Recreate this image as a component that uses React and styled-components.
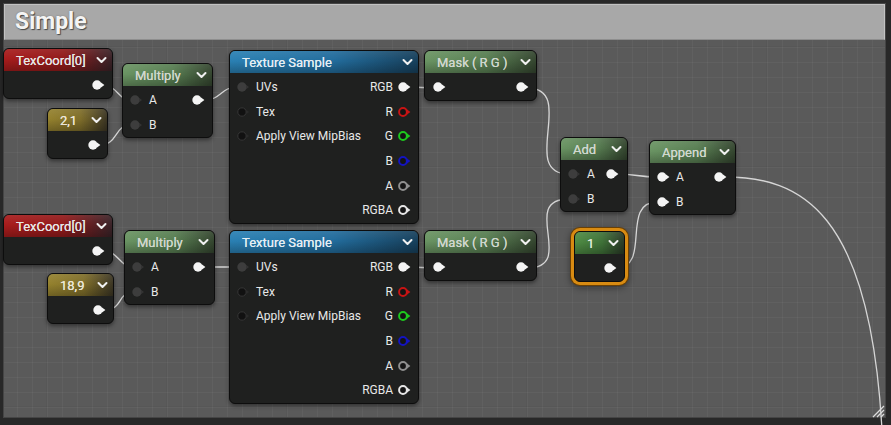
import React from 'react';
import styled, { createGlobalStyle, css } from 'styled-components';

const Global = createGlobalStyle`
  *, *::before, *::after { box-sizing: border-box; }
  html, body { margin: 0; padding: 0; background: #262626; }
  body { font-family: Roboto, "Noto Sans", Arial, sans-serif; }
`;

const HEADS = {
  red: { c1: '#a81c1c', c2: '#921a1b', c3: '#3a2328', text: '#e6e6e6' },
  yellow: { c1: '#95822e', c2: '#7f6e2a', c3: '#3c3624', text: '#ebe6d8' },
  green: { c1: '#6a9463', c2: '#587e52', c3: '#34452f', text: '#d0d7ce' },
  blue: { c1: '#2a80b3', c2: '#226c9c', c3: '#17405c', text: '#e4edf3' },
  const: { c1: '#4f8c44', c2: '#3f7238', c3: '#2a3a27', text: '#e0e7dc' },
};

const Canvas = styled.div`
  position: relative;
  width: 891px;
  height: 425px;
  overflow: hidden;
  background: #282828;
  padding: 3px 5px 7px 3px;
  display: flex;
`;

const Comment = styled.section`
  flex: 1;
  display: flex;
  flex-direction: column;
  border: 1px solid #454545;
  background-color: #5a5a5a;
  background-image:
    linear-gradient(to right, rgba(0, 0, 0, 0.035) 1px, transparent 1px),
    linear-gradient(to bottom, rgba(0, 0, 0, 0.035) 1px, transparent 1px),
    linear-gradient(to right, rgba(255, 255, 255, 0.04) 1px, transparent 1px),
    linear-gradient(to bottom, rgba(255, 255, 255, 0.04) 1px, transparent 1px);
  background-size: 120px 120px, 120px 120px, 15px 15px, 15px 15px;
  background-position: 42px 42px, 42px 42px, 13px 13px, 13px 13px;
`;

const CommentTitle = styled.header`
  height: 36px;
  display: flex;
  align-items: center;
  padding: 0 0 2px 10px;
  background: #a8a8a8;
  border: 1px solid #c2c2c2;
  border-bottom-color: #8e8e8e;
  color: #f4f4f4;
  font-size: 23px;
  font-weight: 700;
  text-shadow: 1px 1px 1px rgba(0, 0, 0, 0.55), 0 0 2px rgba(0, 0, 0, 0.25);
`;

const CommentBody = styled.div`
  flex: 1;
`;

const Wires = styled.svg`
  position: absolute;
  left: 0;
  top: 0;
  pointer-events: none;
`;

const NodeBox = styled.div`
  position: absolute;
  left: ${(p) => p.$x}px;
  top: ${(p) => p.$y}px;
  width: ${(p) => p.$w}px;
  display: flex;
  flex-direction: column;
  background: #1f201f;
  border: 1px solid #0d0d0d;
  border-radius: 6px;
  box-shadow: 0 2px 4px rgba(0, 0, 0, 0.45);
  ${(p) =>
    p.$selected &&
    css`
      box-shadow: 0 0 0 3px #d88b12, 0 0 0 4px #6a4005, 0 2px 6px 4px rgba(0, 0, 0, 0.4);
    `}
`;

const Header = styled.div`
  height: 22px;
  display: flex;
  align-items: center;
  justify-content: space-between;
  padding: 0 5px 0 12px;
  border-radius: 5px 5px 0 0;
  color: ${(p) => p.$h.text};
  font-size: 13px;
  white-space: nowrap;
  text-shadow: 0 0 0.4px currentColor;
  background:
    linear-gradient(to bottom, rgba(255, 255, 255, 0.08) 0%, rgba(0, 0, 0, 0) 45%, rgba(0, 0, 0, 0.26) 100%),
    linear-gradient(to right, ${(p) => p.$h.c1} 0%, ${(p) => p.$h.c2} 55%, ${(p) => p.$h.c3} 100%);
`;

const Body = styled.div`
  display: grid;
  grid-template-columns: 1fr auto;
  padding: 2px ${(p) => p.$pr}px 0 ${(p) => p.$pl}px;
`;

const Col = styled.div`
  display: flex;
  flex-direction: column;
  align-items: ${(p) => (p.$right ? 'flex-end' : 'flex-start')};
`;

const Row = styled.div`
  height: 24.6px;
  display: flex;
  align-items: center;
  gap: 5px;
  font-size: 12px;
  color: #e8e8e8;
  white-space: nowrap;
`;

const PinSvg = styled.svg`
  display: block;
  flex: none;
`;

function Pin({ kind = 'on', color = '#f2f2f2' }) {
  if (kind === 'on') {
    return (
      <PinSvg width="14" height="12" viewBox="0 0 14 12">
        <circle cx="5" cy="6" r="4.7" fill="#f4f4f4" />
        <polygon points="9,3.6 12.4,6 9,8.4" fill="#f4f4f4" />
      </PinSvg>
    );
  }
  if (kind === 'dim') {
    return (
      <PinSvg width="14" height="12" viewBox="0 0 14 12">
        <circle cx="5" cy="6" r="4.7" fill="#3d3d3d" />
        <polygon points="9,3.8 12,6 9,8.2" fill="#333" />
      </PinSvg>
    );
  }
  if (kind === 'hole') {
    return (
      <PinSvg width="14" height="12" viewBox="0 0 14 12">
        <circle cx="5" cy="6" r="4.2" fill="#111" stroke="#363636" strokeWidth="1" />
        <polygon points="9.5,4 12,6 9.5,8" fill="#2c2c2c" />
      </PinSvg>
    );
  }
  return (
    <PinSvg width="14" height="12" viewBox="0 0 14 12">
      <circle cx="5" cy="6" r="3.9" fill="#141414" stroke={color} strokeWidth="2" />
      <polygon points="9,3.6 12.4,6 9,8.4" fill={color} />
    </PinSvg>
  );
}

function Chevron() {
  return (
    <PinSvg width="11" height="8" viewBox="0 0 11 8">
      <polyline points="1.5,2 5.5,6 9.5,2" fill="none" stroke="#f0f0f0" strokeWidth="2" strokeLinecap="round" strokeLinejoin="round" />
    </PinSvg>
  );
}

function Node({ x, y, w, head, title, pl = 7, pr = 6, inputs = [], outputs = [], selected }) {
  return (
    <NodeBox $x={x} $y={y} $w={w} $selected={selected}>
      <Header $h={HEADS[head]}>
        <span>{title}</span>
        <Chevron />
      </Header>
      <Body $pl={pl} $pr={pr}>
        <Col>
          {inputs.map((p, i) => (
            <Row key={i}>
              <Pin kind={p.kind} />
              {p.label && <span>{p.label}</span>}
            </Row>
          ))}
        </Col>
        <Col $right>
          {outputs.map((p, i) => (
            <Row key={i}>
              {p.label && <span>{p.label}</span>}
              <Pin kind={p.kind} color={p.color} />
            </Row>
          ))}
        </Col>
      </Body>
    </NodeBox>
  );
}

const TEX_OUTS = [
  { label: 'RGB', kind: 'on' },
  { label: 'R', kind: 'ring', color: '#c81414' },
  { label: 'G', kind: 'ring', color: '#1ec81e' },
  { label: 'B', kind: 'ring', color: '#1414c0' },
  { label: 'A', kind: 'ring', color: '#8f8f8f' },
  { label: 'RGBA', kind: 'ring', color: '#e6e6e6' },
];
const TEX_INS = [
  { label: 'UVs', kind: 'dim' },
  { label: 'Tex', kind: 'hole' },
  { label: 'Apply View MipBias', kind: 'hole' },
];
const MUL_INS = [
  { label: 'A', kind: 'dim' },
  { label: 'B', kind: 'dim' },
];

const WIRES = [
  'M104,86 C118,86 118,100 131,100',
  'M100,145 C118,145 114,125 131,125',
  'M204,100 C222,100 220,87 238,87',
  'M410,87 L434,88',
  'M527,88 C578,88 518,174 569,174',
  'M617,174 C636,174 638,177 657,177',
  'M616,268 C652,268 620,202 657,202',
  'M725,177 C800,177 870,210 882,430',
  'M104,251 C118,251 120,267 133,267',
  'M106,310 C122,310 118,292 133,292',
  'M205,267 L238,267',
  'M410,267 L434,268',
  'M527,268 C578,268 518,199 569,199',
];

const Grip = styled.svg`
  position: absolute;
  right: 6px;
  bottom: 7px;
`;

export default function App() {
  return (
    <>
      <Global />
      <Canvas>
        <Comment>
          <CommentTitle>Simple</CommentTitle>
          <CommentBody />
        </Comment>

        <Wires width="891" height="425" viewBox="0 0 891 425">
          {WIRES.map((d, i) => (
            <path key={i} d={d} fill="none" stroke="#d6d6d6" strokeWidth="1.3" />
          ))}
        </Wires>

        <Node x={3} y={48} w={110} head="red" title="TexCoord[0]" pr={6} outputs={[{ kind: 'on' }]} />
        <Node x={47} y={108} w={61} head="yellow" title="2,1" pr={5} outputs={[{ kind: 'on' }]} />
        <Node x={122} y={63} w={91} head="green" title="Multiply" pl={7} pr={6} inputs={MUL_INS} outputs={[{ kind: 'on' }]} />
        <Node x={229} y={50} w={190} head="blue" title="Texture Sample" pl={7} pr={6} inputs={TEX_INS} outputs={TEX_OUTS} />
        <Node x={424} y={50} w={113} head="green" title="Mask ( R G )" pl={8} pr={6} inputs={[{ kind: 'on' }]} outputs={[{ kind: 'on' }]} />

        <Node x={560} y={137} w={68} head="green" title="Add" pl={7} pr={7} inputs={MUL_INS} outputs={[{ kind: 'on' }]} />
        <Node
          x={649}
          y={140}
          w={87}
          head="green"
          title="Append"
          pl={7}
          pr={7}
          inputs={[
            { label: 'A', kind: 'on' },
            { label: 'B', kind: 'on' },
          ]}
          outputs={[{ kind: 'on' }]}
        />
        <Node x={574} y={231} w={51} head="const" title="1" pr={6} outputs={[{ kind: 'on' }]} selected />

        <Node x={3} y={214} w={110} head="red" title="TexCoord[0]" pr={6} outputs={[{ kind: 'on' }]} />
        <Node x={47} y={273} w={67} head="yellow" title="18,9" pr={6} outputs={[{ kind: 'on' }]} />
        <Node x={124} y={230} w={91} head="green" title="Multiply" pl={7} pr={7} inputs={MUL_INS} outputs={[{ kind: 'on' }]} />
        <Node x={229} y={230} w={190} head="blue" title="Texture Sample" pl={7} pr={6} inputs={TEX_INS} outputs={TEX_OUTS} />
        <Node x={424} y={230} w={113} head="green" title="Mask ( R G )" pl={8} pr={6} inputs={[{ kind: 'on' }]} outputs={[{ kind: 'on' }]} />

        <Grip width="14" height="14" viewBox="0 0 14 14">
          <path d="M2,13 L13,2 M6,13 L13,6 M10,13 L13,10" stroke="#dcdcdc" strokeWidth="1.3" fill="none" />
        </Grip>
      </Canvas>
    </>
  );
}
